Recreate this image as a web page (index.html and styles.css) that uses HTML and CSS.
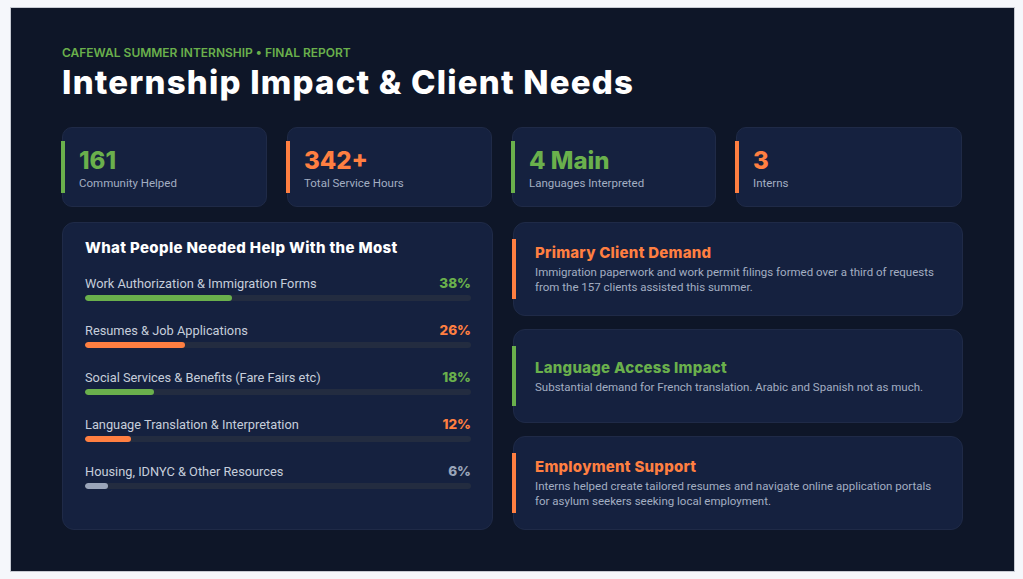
FILE: index.html
```html
<!DOCTYPE html>
<html lang="en">
<head>
<meta charset="utf-8">
<title>Internship Impact &amp; Client Needs</title>
<link rel="stylesheet" href="styles.css">
</head>
<body>
<main class="slide">
  <header class="head">
    <p class="kicker">CAFEWAL SUMMER INTERNSHIP • FINAL REPORT</p>
    <h1 class="title">Internship Impact &amp; Client Needs</h1>
  </header>

  <section class="stats">
    <div class="stat green"><div class="num">161</div><div class="lbl">Community Helped</div></div>
    <div class="stat orange"><div class="num">342+</div><div class="lbl">Total Service Hours</div></div>
    <div class="stat green"><div class="num">4 Main</div><div class="lbl">Languages Interpreted</div></div>
    <div class="stat orange"><div class="num">3</div><div class="lbl">Interns</div></div>
  </section>

  <section class="main">
    <div class="panel">
      <h2 class="panel-title">What People Needed Help With the Most</h2>
      <div class="rows">
        <div class="row green">
          <div class="row-top"><span class="row-lbl">Work Authorization &amp; Immigration Forms</span><span class="pct">38%</span></div>
          <div class="track"><div class="fill" style="width:38%"></div></div>
        </div>
        <div class="row orange">
          <div class="row-top"><span class="row-lbl">Resumes &amp; Job Applications</span><span class="pct">26%</span></div>
          <div class="track"><div class="fill" style="width:26%"></div></div>
        </div>
        <div class="row green">
          <div class="row-top"><span class="row-lbl">Social Services &amp; Benefits (Fare Fairs etc)</span><span class="pct">18%</span></div>
          <div class="track"><div class="fill" style="width:18%"></div></div>
        </div>
        <div class="row orange">
          <div class="row-top"><span class="row-lbl">Language Translation &amp; Interpretation</span><span class="pct">12%</span></div>
          <div class="track"><div class="fill" style="width:12%"></div></div>
        </div>
        <div class="row grey">
          <div class="row-top"><span class="row-lbl">Housing, IDNYC &amp; Other Resources</span><span class="pct">6%</span></div>
          <div class="track"><div class="fill" style="width:6%"></div></div>
        </div>
      </div>
    </div>

    <div class="insights">
      <div class="insight orange">
        <h3 class="ins-title">Primary Client Demand</h3>
        <p class="ins-body">Immigration paperwork and work permit filings formed over a third of requests from the 157 clients assisted this summer.</p>
      </div>
      <div class="insight green">
        <h3 class="ins-title">Language Access Impact</h3>
        <p class="ins-body">Substantial demand for French translation. Arabic and Spanish not as much.</p>
      </div>
      <div class="insight orange">
        <h3 class="ins-title">Employment Support</h3>
        <p class="ins-body">Interns helped create tailored resumes and navigate online application portals for asylum seekers seeking local employment.</p>
      </div>
    </div>
  </section>
</main>
</body>
</html>
```

FILE: styles.css
```css
* { box-sizing: border-box; }

html, body {
  margin: 0;
  background: #f5f7fb;
}

body {
  padding: 7px 8px 0 10px;
  font-family: Roboto, "Liberation Sans", sans-serif;
}

.slide {
  width: 1005px;
  height: 565px;
  background: #0e1628;
  border: 1px solid #c6cad2;
  padding: 37px 51px 0 51px;
  color: #ffffff;
}

.head { margin: 0; }

.kicker {
  margin: 0;
  font-family: Inter, sans-serif;
  font-weight: 600;
  font-size: 12px;
  line-height: 16px;
  letter-spacing: 0;
  color: #6ab04c;
}

.title {
  margin: 1px 0 0 0;
  font-family: Inter, sans-serif;
  font-weight: 800;
  font-size: 33px;
  line-height: 40px;
  letter-spacing: 1.2px;
  color: #ffffff;
}

.green { --accent: #6ab04c; }
.orange { --accent: #ff7f41; }
.grey { --accent: #9aa5b9; }

.stats {
  display: grid;
  grid-template-columns: 205px 205px 204px 226px;
  column-gap: 20px;
  margin-top: 25px;
}

.stat {
  position: relative;
  height: 80px;
  background: #15213f;
  border: 1px solid #1f2a47;
  border-radius: 10px;
  padding: 18px 12px 0 16px;
}

.stat::before,
.insight::before {
  content: "";
  position: absolute;
  left: -2px;
  top: 13px;
  bottom: 13px;
  width: 4px;
  background: var(--accent);
}

.num {
  font-family: Inter, sans-serif;
  font-weight: 800;
  font-size: 24px;
  line-height: 30px;
  color: var(--accent);
}

.lbl {
  font-size: 11.5px;
  line-height: 15px;
  color: #a3aec2;
  margin-top: 0;
}

.main {
  display: grid;
  grid-template-columns: 431px 450px;
  column-gap: 20px;
  margin-top: 15px;
  height: 308px;
}

.panel {
  background: #15213f;
  border: 1px solid #1f2a47;
  border-radius: 12px;
  padding: 15px 21px 0 22px;
}

.panel-title {
  margin: 0;
  font-family: Inter, sans-serif;
  font-weight: 800;
  font-size: 15px;
  line-height: 20px;
  letter-spacing: 0.35px;
  color: #ffffff;
}

.rows {
  display: flex;
  flex-direction: column;
  gap: 20px;
  margin-top: 16px;
}

.row-top {
  display: flex;
  justify-content: space-between;
  align-items: center;
  height: 18px;
}

.row-lbl {
  font-size: 12.8px;
  color: #c6cedb;
}

.pct {
  font-family: Inter, sans-serif;
  font-weight: 800;
  font-size: 13.5px;
  color: var(--accent);
}

.track {
  margin-top: 3px;
  height: 6px;
  border-radius: 3px;
  background: #232c40;
  overflow: hidden;
}

.fill {
  height: 100%;
  border-radius: 3px;
  background: var(--accent);
}

.insights {
  display: grid;
  grid-template-rows: repeat(3, 1fr);
  row-gap: 13px;
}

.insight {
  position: relative;
  background: #15213f;
  border: 1px solid #1f2a47;
  border-radius: 12px;
  padding: 0 24px 0 21px;
  display: flex;
  flex-direction: column;
  justify-content: center;
}

.insight::before {
  top: 16px;
  bottom: 16px;
}

.ins-title {
  margin: 0;
  font-family: Inter, sans-serif;
  font-weight: 800;
  font-size: 15px;
  line-height: 20px;
  letter-spacing: 0.25px;
  color: var(--accent);
}

.ins-body {
  margin: 2px 0 0 0;
  font-size: 11.5px;
  line-height: 15px;
  color: #a3aec2;
}
```
